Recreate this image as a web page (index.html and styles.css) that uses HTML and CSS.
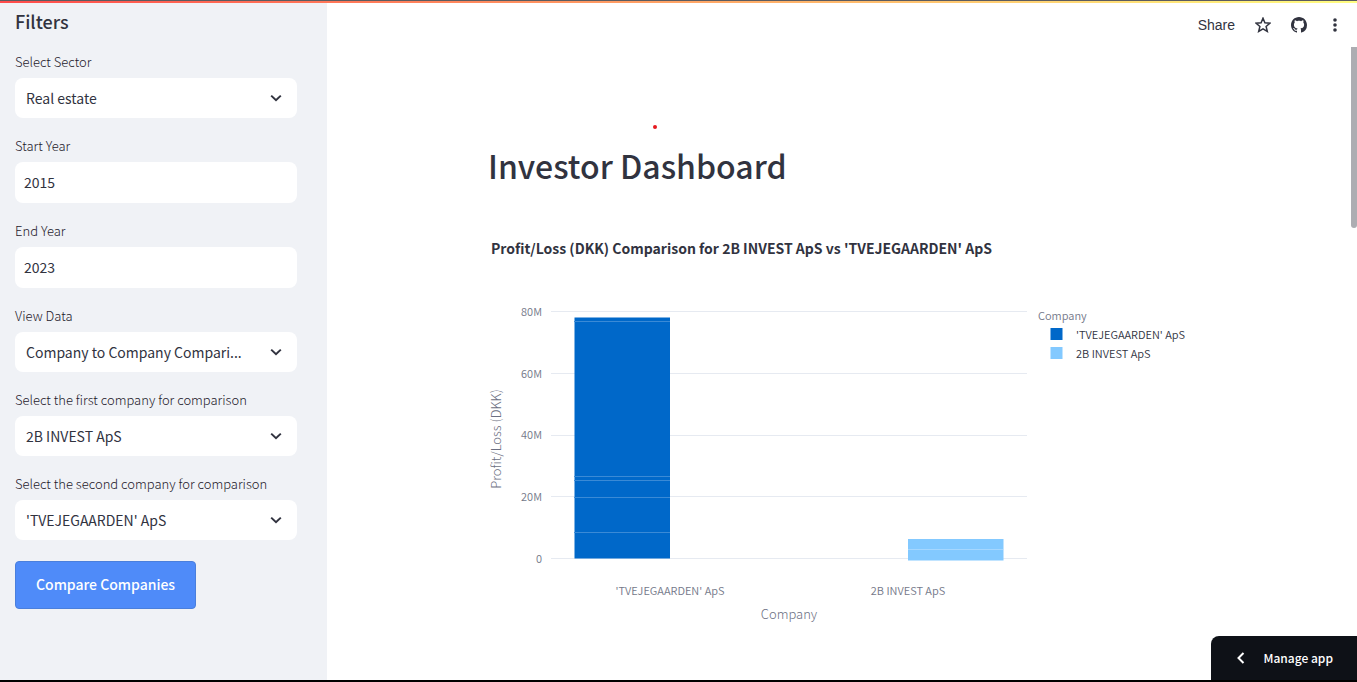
FILE: index.html
```html
<!DOCTYPE html>
<html lang="en">
<head>
<meta charset="utf-8">
<meta name="viewport" content="width=device-width, initial-scale=1">
<title>Investor Dashboard</title>
<link rel="stylesheet" href="styles.css">
</head>
<body>
<div class="app">
  <div class="decoration"></div>
  <div class="layout">
    <aside class="sidebar">
      <h2 class="sidebar-title">Filters</h2>
      <form class="filters">
        <div class="field">
          <label for="sector">Select Sector</label>
          <div class="select-box">
            <select id="sector"><option>Real estate</option></select>
            <svg class="chevron" viewBox="0 0 12 12" aria-hidden="true"><path d="M1.2 3.6L6 8.200l4.800-4.600"/></svg>
          </div>
        </div>
        <div class="field">
          <label for="start">Start Year</label>
          <input id="start" type="text" value="2015">
        </div>
        <div class="field">
          <label for="end">End Year</label>
          <input id="end" type="text" value="2023">
        </div>
        <div class="field">
          <label for="view">View Data</label>
          <div class="select-box">
            <select id="view"><option>Company to Company Compari...</option></select>
            <svg class="chevron" viewBox="0 0 12 12" aria-hidden="true"><path d="M1.2 3.6L6 8.200l4.800-4.600"/></svg>
          </div>
        </div>
        <div class="field">
          <label for="first">Select the first company for comparison</label>
          <div class="select-box">
            <select id="first"><option>2B INVEST ApS</option></select>
            <svg class="chevron" viewBox="0 0 12 12" aria-hidden="true"><path d="M1.2 3.6L6 8.200l4.800-4.600"/></svg>
          </div>
        </div>
        <div class="field">
          <label for="second">Select the second company for comparison</label>
          <div class="select-box">
            <select id="second"><option>'TVEJEGAARDEN' ApS</option></select>
            <svg class="chevron" viewBox="0 0 12 12" aria-hidden="true"><path d="M1.2 3.6L6 8.200l4.800-4.600"/></svg>
          </div>
        </div>
        <button class="compare" type="button">Compare Companies</button>
      </form>
    </aside>

    <main class="main">
      <header class="toolbar">
        <button class="tool share" type="button">Share</button>
        <button class="tool" type="button" aria-label="Favorite">
          <svg class="tool-icon" viewBox="0 0 16 16"><path class="star" d="M8 1.2l1.9 4.6 5 .4-3.8 3.3 1.2 4.9L8 11.8l-4.3 2.6 1.2-4.9L1.1 6.2l5-.4z"/></svg>
        </button>
        <button class="tool" type="button" aria-label="View source">
          <svg class="tool-icon" viewBox="0 0 16 16"><path d="M8 0C3.58 0 0 3.58 0 8c0 3.54 2.29 6.53 5.47 7.59.4.07.55-.17.55-.38 0-.19-.01-.82-.01-1.49-2.01.37-2.53-.49-2.69-.94-.09-.23-.48-.94-.82-1.13-.28-.15-.68-.52-.01-.53.63-.01 1.08.58 1.23.82.72 1.21 1.87.87 2.33.66.07-.52.28-.87.51-1.07-1.78-.2-3.64-.89-3.64-3.95 0-.87.31-1.59.82-2.15-.08-.2-.36-1.02.08-2.12 0 0 .67-.21 2.2.82.64-.18 1.32-.27 2-.27s1.36.09 2 .27c1.53-1.04 2.2-.82 2.2-.82.44 1.1.16 1.92.08 2.12.51.56.82 1.27.82 2.15 0 3.07-1.87 3.75-3.65 3.95.29.25.54.73.54 1.48 0 1.07-.01 1.93-.01 2.2 0 .21.15.46.55.38A8.01 8.01 0 0 0 16 8c0-4.42-3.58-8-8-8z"/></svg>
        </button>
        <button class="tool" type="button" aria-label="Menu">
          <svg class="tool-icon" viewBox="0 0 16 16"><circle cx="8" cy="3" r="1.8"/><circle cx="8" cy="8" r="1.8"/><circle cx="8" cy="13" r="1.8"/></svg>
        </button>
      </header>

      <div class="content">
        <span class="marker"></span>
        <h1 class="title">Investor Dashboard</h1>
        <svg class="chart" viewBox="0 0 708 400" role="img" aria-label="Profit and loss comparison">
          <text class="chart-title" x="3" y="19">Profit/Loss (DKK) Comparison for 2B INVEST ApS vs 'TVEJEGAARDEN' ApS</text>
          <g class="gridlines">
            <path d="M63 76.5H539M63 138.5H539M63 200.5H539M63 261.5H539M63 323.5H539"/>
          </g>
          <g class="tick tick-y">
            <text x="54" y="81">80M</text>
            <text x="54" y="143">60M</text>
            <text x="54" y="204">40M</text>
            <text x="54" y="266">20M</text>
            <text x="54" y="328">0</text>
          </g>
          <rect class="bar-a" x="86.5" y="82.5" width="95.5" height="241"/>
          <path class="split-a" d="M86 86.5H182M86 241.5H182M86 245.5H182M86 262.5H182M86 297.5H182"/>
          <rect class="bar-b" x="420" y="304" width="95.5" height="21.5"/>
          <path class="split-b" d="M420 314.5H515"/>
          <g class="tick tick-x">
            <text x="182" y="360">'TVEJEGAARDEN' ApS</text>
            <text x="420" y="360">2B INVEST ApS</text>
          </g>
          <text class="axis" x="301" y="384">Company</text>
          <text class="axis" transform="translate(13 204) rotate(-90)">Profit/Loss (DKK)</text>
          <g class="legend">
            <text class="legend-title" x="550" y="85">Company</text>
            <rect class="bar-a" x="562.5" y="93" width="12" height="12"/>
            <text x="588" y="104">'TVEJEGAARDEN' ApS</text>
            <rect class="bar-b" x="562.5" y="112" width="12" height="12"/>
            <text x="588" y="123">2B INVEST ApS</text>
          </g>
        </svg>
      </div>
    </main>
  </div>
  <div class="scroll-thumb"></div>
  <button class="manage" type="button">
    <svg class="manage-icon" viewBox="0 0 12 12" aria-hidden="true"><path d="M8.500 1L3.500 6l5 5"/></svg>
    Manage app
  </button>
</div>
</body>
</html>
```
FILE: styles.css
```css
* { box-sizing: border-box; }

body {
  margin: 0;
  background: #fff;
  color: #31333f;
  font-family: "Noto Sans CJK SC", "Noto Sans", sans-serif;
  font-size: 14px;
}

button, input, select { font: inherit; color: inherit; }

.app {
  position: relative;
  display: flex;
  flex-direction: column;
  min-height: 100vh;
  border-top: 1px solid #5c5c60;
  border-bottom: 2px solid #000;
}

.decoration {
  height: 2px;
  background: linear-gradient(90deg, #ff4b4b, #fffd80);
}

.layout { display: flex; flex: 1; }

.sidebar {
  flex: none;
  width: 327px;
  padding: 6px 30px 16px 15px;
  background: #f0f2f6;
}

.sidebar-title {
  margin: 0 0 19px;
  font-size: 18px;
  font-weight: 500;
  line-height: 24px;
}

.filters {
  display: flex;
  flex-direction: column;
  align-items: stretch;
  gap: 18px;
}

.field { display: flex; flex-direction: column; gap: 6px; }

.field label {
  color: #1e202b;
  font-size: 13px;
  font-weight: 300;
  line-height: 20px;
}

.field input {
  width: 100%;
  height: 41px;
  padding: 0 9px 2px;
  border: 0;
  border-radius: 8px;
  background: #fff;
}

.select-box { display: grid; align-items: center; }
.select-box > * { grid-area: 1 / 1; }

.select-box select {
  width: 100%;
  height: 40px;
  padding: 0 40px 0 11px;
  border: 0;
  border-radius: 8px;
  background: #fff;
  appearance: none;
  text-overflow: ellipsis;
}

.chevron {
  justify-self: end;
  width: 12px;
  height: 12px;
  margin-right: 15px;
  fill: none;
  stroke: #31333f;
  stroke-width: 2;
  pointer-events: none;
}

.compare {
  align-self: flex-start;
  height: 48px;
  margin-top: 3px;
  padding: 0 20px 2px;
  border: 1px solid #4a7fdc;
  border-radius: 4px;
  background: #4f8bf9;
  color: #fff;
  font-weight: 500;
}

.main { flex: 1; min-width: 0; }

.toolbar {
  display: flex;
  justify-content: flex-end;
  align-items: center;
  gap: 20px;
  height: 44px;
  padding-right: 14px;
}

.tool {
  display: flex;
  padding: 0;
  border: 0;
  background: none;
}

.share { font-family: "Liberation Sans", Arial, sans-serif; }

.tool-icon { width: 16px; height: 16px; fill: #31333f; }

.star { fill: none; stroke: #31333f; stroke-width: 1.5; }

.content {
  position: relative;
  max-width: 708px;
  margin: 0 auto;
  padding-top: 94px;
}

.marker {
  position: absolute;
  top: 78px;
  left: 165px;
  width: 4px;
  height: 4px;
  border-radius: 50%;
  background: #e6191e;
}

.title {
  margin: 0 0 46px;
  font-size: 32px;
  font-weight: 500;
  line-height: 48px;
}

.chart { display: block; width: 100%; height: auto; overflow: visible; }

.chart-title { font-size: 14px; font-weight: 700; fill: #31333f; }
.gridlines { fill: none; stroke: #e6eaf1; }
.tick { font-size: 11px; font-weight: 350; fill: #747889; }
.tick-y { text-anchor: end; }
.tick-x { text-anchor: middle; }
.axis { font-size: 13px; font-weight: 300; fill: #6c7082; text-anchor: middle; }
.bar-a { fill: #0068c9; }
.bar-b { fill: #83c9ff; }
.split-a { fill: none; stroke: #3a8ad6; }
.split-b { fill: none; stroke: #a5d7ff; }
.legend { font-size: 11px; font-weight: 350; fill: #31333f; }
.legend-title { fill: #747889; }

.scroll-thumb {
  position: absolute;
  top: 46px;
  right: 0;
  width: 6px;
  height: 181px;
  border-radius: 0 0 3px 3px;
  background: #adadb2;
}

.manage {
  position: absolute;
  right: 0;
  bottom: 0;
  display: flex;
  align-items: center;
  gap: 17px;
  height: 44px;
  padding: 0 24px 1px;
  border: 0;
  border-radius: 8px 0 0 0;
  background: #0e1117;
  color: #fff;
  font-size: 12px;
  font-weight: 500;
}

.manage-icon { width: 12px; height: 12px; fill: none; stroke: #fff; stroke-width: 2; }
```
